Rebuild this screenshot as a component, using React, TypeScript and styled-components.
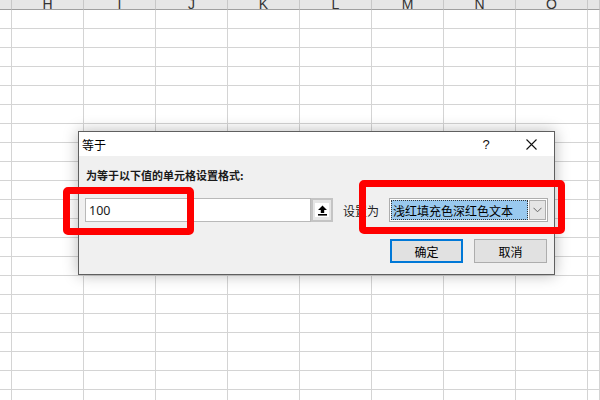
import React from "react";
import styled, { createGlobalStyle } from "styled-components";

const Global = createGlobalStyle`
  html, body { margin: 0; padding: 0; background: #fff; }
  body { width: 600px; height: 400px; overflow: hidden; font-family: "Noto Sans", "Noto Sans CJK SC", sans-serif; }
`;

const Page = styled.div`
  position: relative;
  width: 600px;
  height: 400px;
  overflow: hidden;
  background: #fff;
`;

const Sheet = styled.div`
  display: grid;
  grid-template-columns: 12px repeat(8, 72px) 12px;
  grid-auto-rows: 19px;
  grid-template-rows: 10px;
`;

const HeadCell = styled.div`
  box-sizing: border-box;
  background: #e6e6e6;
  border-right: 1px solid #c8c8c8;
  border-bottom: 1px solid #9f9f9f;
  display: flex;
  align-items: flex-end;
  justify-content: center;
  overflow: hidden;
  font-family: "Liberation Sans", Arial, sans-serif;
  font-size: 14px;
  color: #333;
  line-height: 12px;
`;

const HeadLabel = styled.span`
  display: block;
  height: 9px;
  line-height: 12px;
  margin-bottom: -1px;
  position: relative;
  top: -3px;
`;

const Cell = styled.div`
  box-sizing: border-box;
  border-right: 1px solid #d4d4d4;
  border-bottom: 1px solid #d4d4d4;
`;

const Dialog = styled.div`
  position: absolute;
  left: 78px;
  top: 131px;
  width: 477px;
  box-sizing: border-box;
  border: 1px solid #5f5f5f;
  background: #f0f0f0;
  box-shadow: 0 0 14px rgba(0, 0, 0, 0.28);
  display: flex;
  flex-direction: column;
  font-family: "Noto Sans CJK SC", "Noto Sans", sans-serif;
  color: #000;
`;

const TitleBar = styled.div`
  height: 24px;
  background: #fff;
  display: flex;
  align-items: center;
  padding-left: 3px;
  font-size: 12px;
`;

const TitleText = styled.span`
  flex: 1;
`;

const TitleBtn = styled.span<{ $w: number }>`
  width: ${(p) => p.$w}px;
  height: 24px;
  display: flex;
  align-items: center;
  justify-content: center;
  font-family: "Liberation Sans", Arial, sans-serif;
  font-size: 13px;
  color: #111;
`;

const Body = styled.div`
  padding: 12px 6px 11px 6px;
  display: flex;
  flex-direction: column;
`;

const Prompt = styled.div`
  font-size: 11px;
  line-height: 14px;
  height: 14px;
  font-weight: bold;
  padding-left: 1px;
  color: #1a1a1a;
`;

const InputRow = styled.div`
  margin-top: 16px;
  height: 24px;
  display: flex;
  align-items: center;
`;

const TextBox = styled.div`
  box-sizing: border-box;
  width: 226px;
  height: 24px;
  background: #fff;
  border: 1px solid #b9b9b9;
  display: flex;
  align-items: center;
  padding-left: 3px;
  font-family: "Noto Sans", "Liberation Sans", sans-serif;
  font-size: 12.5px;
  color: #1a1a1a;
`;

const RefButton = styled.div`
  box-sizing: border-box;
  width: 22px;
  height: 24px;
  border: 2px solid #c4c4c4;
  background: #e6e6e6;
  display: flex;
  align-items: center;
  justify-content: center;
`;

const RefFace = styled.div`
  width: 14px;
  height: 14px;
  background: #fff;
  display: flex;
  align-items: center;
  justify-content: center;
`;

const FieldLabel = styled.span`
  margin-left: 10px;
  width: 36px;
  font-size: 12px;
  color: #222;
`;

const Select = styled.div`
  box-sizing: border-box;
  margin-left: 10px;
  width: 159px;
  height: 24px;
  background: #fff;
  border: 1px solid #adadad;
  display: flex;
  align-items: center;
  padding: 1px;
  gap: 1px;
`;

const Selected = styled.div`
  flex: 1;
  height: 20px;
  box-sizing: border-box;
  background: #99c9ef;
  border: 1px dotted #333;
  display: flex;
  align-items: center;
  padding-left: 1px;
  font-size: 12px;
  color: #000;
  white-space: nowrap;
  overflow: hidden;
`;

const DropBtn = styled.div`
  box-sizing: border-box;
  width: 17px;
  height: 20px;
  background: #e5e5e5;
  border: 1px solid #acacac;
  display: flex;
  align-items: center;
  justify-content: center;
`;

const ButtonRow = styled.div`
  margin-top: 17px;
  display: flex;
  justify-content: flex-end;
  gap: 11px;
  padding-right: 1px;
`;

const Button = styled.div<{ $primary?: boolean }>`
  box-sizing: border-box;
  width: 73px;
  height: 24px;
  background: #e1e1e1;
  border: ${(p) => (p.$primary ? "2px solid #0078d7" : "1px solid #adadad")};
  display: flex;
  align-items: center;
  justify-content: center;
  font-size: 12px;
  color: #000;
`;

const Highlight = styled.div<{ $x: number; $y: number; $w: number; $h: number }>`
  position: absolute;
  left: ${(p) => p.$x}px;
  top: ${(p) => p.$y}px;
  width: ${(p) => p.$w}px;
  height: ${(p) => p.$h}px;
  box-sizing: border-box;
  border: 7px solid #ff0000;
  border-radius: 5px;
  pointer-events: none;
`;

const cols = ["", "H", "I", "J", "K", "L", "M", "N", "O", ""];
const ROWS = 21;

export default function App() {
  return (
    <Page>
      <Global />
      <Sheet>
        {cols.map((c, i) => (
          <HeadCell key={`h${i}`}>
            <HeadLabel>{c}</HeadLabel>
          </HeadCell>
        ))}
        {Array.from({ length: ROWS * cols.length }).map((_, i) => (
          <Cell key={i} />
        ))}
      </Sheet>

      <Dialog>
        <TitleBar>
          <TitleText>等于</TitleText>
          <TitleBtn $w={44}>?</TitleBtn>
          <TitleBtn $w={46}>
            <svg width="11" height="11" viewBox="0 0 11 11">
              <path d="M0.5 0.5 L10.5 10.5 M10.5 0.5 L0.5 10.5" stroke="#111" strokeWidth="1.1" fill="none" />
            </svg>
          </TitleBtn>
        </TitleBar>
        <Body>
          <Prompt>为等于以下值的单元格设置格式:</Prompt>
          <InputRow>
            <TextBox>100</TextBox>
            <RefButton>
              <RefFace>
                <svg width="11" height="11" viewBox="0 0 11 11">
                  <path d="M5.5 0.5 L1 5 L3.8 5 L3.8 8 L7.2 8 L7.2 5 L10 5 Z" fill="#000" />
                  <rect x="1" y="9" width="9" height="1.6" fill="#000" />
                </svg>
              </RefFace>
            </RefButton>
            <FieldLabel>设置为</FieldLabel>
            <Select>
              <Selected>浅红填充色深红色文本</Selected>
              <DropBtn>
                <svg width="9" height="6" viewBox="0 0 9 6">
                  <path d="M0.5 0.8 L4.5 4.8 L8.5 0.8" stroke="#666" strokeWidth="1" fill="none" />
                </svg>
              </DropBtn>
            </Select>
          </InputRow>
          <ButtonRow>
            <Button $primary>确定</Button>
            <Button>取消</Button>
          </ButtonRow>
        </Body>
      </Dialog>

      <Highlight $x={63} $y={187} $w={131} $h={48} />
      <Highlight $x={359} $y={180} $w={206} $h={54} />
    </Page>
  );
}
